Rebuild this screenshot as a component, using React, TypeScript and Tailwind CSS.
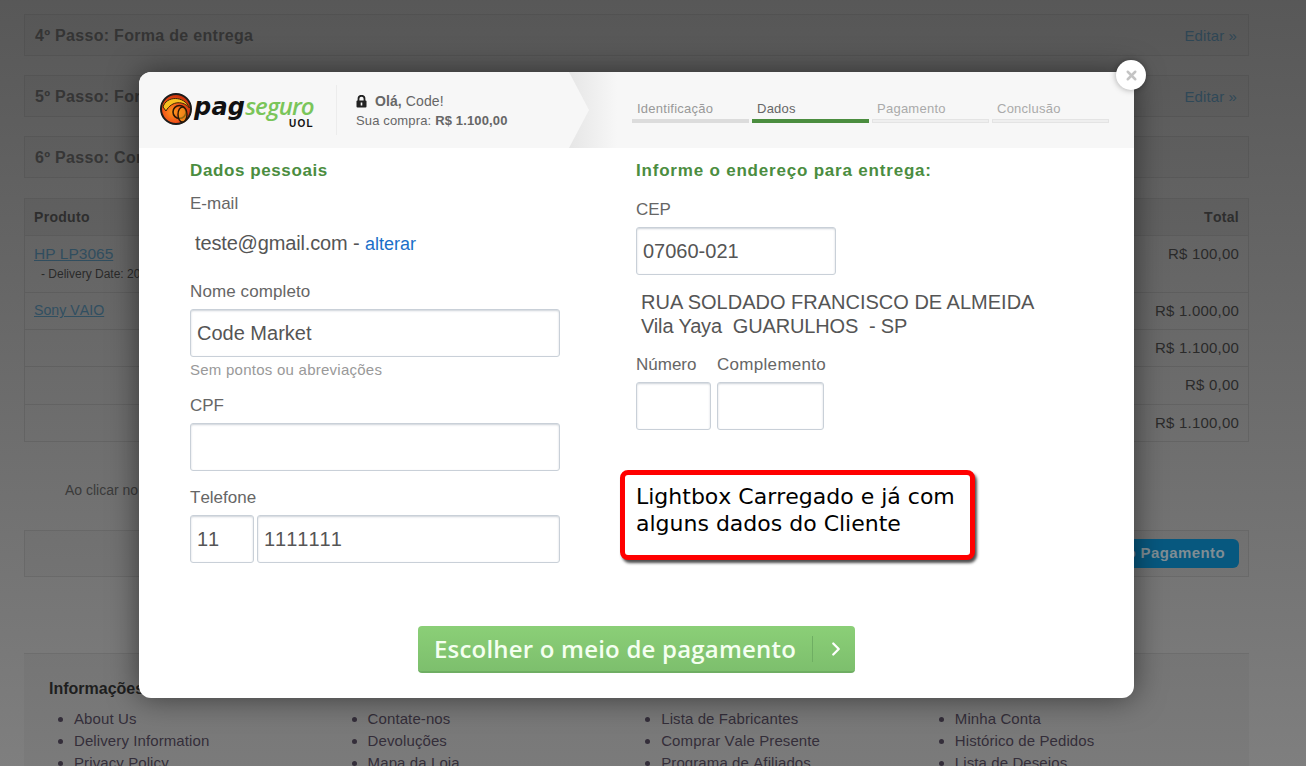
import React from "react";
import { X, ChevronRight } from "lucide-react";

const steps = [
  { title: "4º Passo: Forma de entrega", edit: true },
  { title: "5º Passo: Forma de pagamento", edit: true },
  { title: "6º Passo: Confirmar pedido", edit: false },
];

const totals = [
  { value: "R$ 1.100,00", height: "h-[37px]" },
  { value: "R$ 0,00", height: "h-[38px]" },
  { value: "R$ 1.100,00", height: "h-[37px]" },
];

const footerLists = [
  { title: "Informações", items: ["About Us", "Delivery Information", "Privacy Policy"] },
  { title: "", items: ["Contate-nos", "Devoluções", "Mapa da Loja"] },
  { title: "", items: ["Lista de Fabricantes", "Comprar Vale Presente", "Programa de Afiliados"] },
  { title: "", items: ["Minha Conta", "Histórico de Pedidos", "Lista de Desejos"] },
];

const wizard = [
  { label: "Identificação", text: "text-[#999]", bar: "bg-[#dcdcdc]" },
  { label: "Dados", text: "text-[#666]", bar: "bg-[#4b8d3f]" },
  { label: "Pagamento", text: "text-[#aaa]", bar: "bg-[#efefef] border border-[#e4e4e4]" },
  { label: "Conclusão", text: "text-[#aaa]", bar: "bg-[#efefef] border border-[#e4e4e4]" },
];

const Field = ({ value, className }: { value?: string; className: string }) => (
  <div
    className={`h-12 shrink-0 rounded-[3px] border border-[#c9d0d8] bg-white px-[6px] text-[20px] leading-[46px] text-[#555] shadow-[inset_0_1px_2px_rgba(90,105,125,0.3)] ${className}`}
  >
    {value}
  </div>
);

const Logo = () => (
  <div className="flex w-[177px] items-start">
    <svg width="32" height="32" viewBox="0 0 32 32" className="mt-[1px] shrink-0">
      <defs>
        <radialGradient id="uol" cx="0.4" cy="0.6" r="0.6">
          <stop offset="0" stopColor="#ff9a1a" />
          <stop offset="0.6" stopColor="#f0501a" />
          <stop offset="1" stopColor="#c8320a" />
        </radialGradient>
      </defs>
      <circle cx="16" cy="16" r="15" fill="url(#uol)" stroke="#1c1c1c" strokeWidth="2" />
      <path d="M3 14C6 3 24 2 29.5 15C24 8 12 7 6 18Z" fill="#f8c020" stroke="#3a2408" strokeWidth="1" />
      <circle cx="19.5" cy="19" r="6.5" fill="none" stroke="#2a1606" strokeWidth="1.6" />
      <ellipse cx="22.5" cy="21.5" rx="4.5" ry="7.5" fill="#f6b81a" fillOpacity="0.5" stroke="#2a1606" strokeWidth="1.4" />
    </svg>
    <div className="ml-[2px] flex flex-col items-end">
      <div className="text-[24px] leading-[28px] italic">
        <span className="font-['DejaVu_Sans',sans-serif] font-bold tracking-[0.2px] text-[#111]">pag</span>
        <span className="font-['Open_Sans',sans-serif] font-semibold tracking-[-0.9px] text-[#7ac55a]">seguro</span>
      </div>
      <div className="-mt-[2px] text-[10px] leading-[10px] font-bold tracking-[1.2px] text-[#111]">UOL</div>
    </div>
  </div>
);

export default function App() {
  return (
    <div className="relative h-[766px] w-[1306px] overflow-hidden bg-white font-['Liberation_Sans',Arial,sans-serif] [font-kerning:none]">
      {/* Checkout page behind the lightbox */}
      <div className="flex flex-col px-6 pt-[14px] text-[15px] text-[#444]">
        <div className="flex w-[1225px] flex-col gap-[19px]">
          {steps.map((s) => (
            <div
              key={s.title}
              className="flex h-[42px] items-center justify-between border border-[#ddd] bg-[#f8f8f8] pt-[2px] pr-[11px] pl-[10px]"
            >
              <span className="text-[16px] font-bold tracking-[0.3px] text-[#555]">{s.title}</span>
              {s.edit && <span className="text-[15px] tracking-[0.1px] text-[#3ba7e8]">Editar »</span>}
            </div>
          ))}
        </div>

        <div className="mt-[20px] flex w-[1225px] flex-col border border-b-0 border-[#ddd]">
          <div className="flex h-[37px] items-center justify-between border-b border-[#ddd] bg-[#f2f2f2] px-[9px] text-[14px] font-bold tracking-[0.3px] text-[#333]">
            <span>Produto</span>
            <span>Total</span>
          </div>
          <div className="flex h-[57px] justify-between border-b border-[#ddd] px-[9px] pt-[9px]">
            <div>
              <div className="text-[15.5px] leading-[18px] text-[#3ba7e8] underline">HP LP3065</div>
              <div className="pt-[1px] pl-[7px] text-[12px] leading-[20px] text-[#222]">- Delivery Date: 2011-04-22</div>
            </div>
            <span className="leading-[18px] tracking-[0.2px] text-[#222]">R$ 100,00</span>
          </div>
          <div className="flex h-[37px] items-center justify-between border-b border-[#ddd] px-[9px]">
            <span className="text-[14.2px] text-[#3ba7e8] underline">Sony VAIO</span>
            <span className="tracking-[0.2px] text-[#222]">R$ 1.000,00</span>
          </div>
          {totals.map((t, i) => (
            <div
              key={i}
              className={`flex items-center justify-end border-b border-[#ddd] px-[9px] tracking-[0.2px] text-[#222] ${t.height}`}
            >
              <span>{t.value}</span>
            </div>
          ))}
        </div>

        <div className="mt-[39px] pl-[41px] text-[14px] leading-[18px] text-[#555]">Ao clicar no botão</div>

        <div className="mt-[31px] flex h-[47px] w-[1225px] items-center justify-end border border-[#ddd] bg-[#f8f8f8] pr-[9px]">
          <div className="relative z-10 flex h-[29px] w-[300px] items-center justify-end rounded-[6px] bg-[#07587f] pr-[14px] text-[15px] font-bold tracking-[0.4px] text-[#7f8d94]">
            Ir para o Pagamento
          </div>
        </div>

        <div className="mt-[76px] h-[160px] w-[1225px] border-t border-[#ddd] bg-[#f4f4f4] pt-[25px] pl-[25px]">
          <div className="grid grid-cols-[293.6px_293.6px_293.6px_293.6px]">
            {footerLists.map((col, i) => (
              <div key={i}>
                <div className="h-[29px] text-[16px] leading-[20px] font-bold text-black">{col.title}</div>
                <ul className="list-disc pl-[25px] text-[15px] leading-[22px] tracking-[0.1px] text-[#3a2a4a]">
                  {col.items.map((it) => (
                    <li key={it}>{it}</li>
                  ))}
                </ul>
              </div>
            ))}
          </div>
        </div>
      </div>

      {/* Dark backdrop */}
      <div className="absolute inset-0 bg-gradient-to-b from-[rgba(43,43,43,0.79)] to-[rgba(48,48,48,0.62)]" />

      {/* Lightbox */}
      <div className="absolute top-[72px] left-[139px] z-20 h-[626px] w-[995px] rounded-[12px] bg-white shadow-[0_0_30px_rgba(0,0,0,0.5)]">
        <header className="relative flex h-[76px] items-center overflow-hidden rounded-t-[12px] bg-[#f7f7f7] pl-[21px]">
          <Logo />
          <div className="ml-[-1px] h-[50px] w-px bg-[#ececec]" />
          <div className="ml-[19px] pt-[2px]">
            <div className="flex items-center text-[14px] leading-[19px] tracking-[0.1px] text-[#666]">
              <svg width="11" height="13" viewBox="0 0 11 13" className="mr-[8px] text-[#222]">
                <path d="M2.5 6V3.8a3 3 0 0 1 6 0V6" fill="none" stroke="currentColor" strokeWidth="1.8" />
                <rect x="0.5" y="5.5" width="10" height="7" rx="1" fill="currentColor" />
                <rect x="4.7" y="7.5" width="1.6" height="3" fill="#f7f7f7" />
              </svg>
              <b>Olá,&nbsp;</b>Code!
            </div>
            <div className="text-[13px] leading-[19px] tracking-[0.15px] text-[#666]">
              Sua compra: <b>R$ 1.100,00</b>
            </div>
          </div>
          <svg width="48" height="76" viewBox="0 0 48 76" className="absolute top-0 left-[430px]">
            <defs>
              <linearGradient id="arrow" x1="0" x2="1" y1="0" y2="0">
                <stop offset="0" stopColor="#e6e6e6" />
                <stop offset="1" stopColor="#f7f7f7" />
              </linearGradient>
            </defs>
            <rect width="48" height="76" fill="url(#arrow)" />
            <path d="M0 0L20 38L0 76Z" fill="#f7f7f7" />
          </svg>
          <div className="relative ml-auto flex gap-[3px] pt-[3px] pr-[25px]">
            {wizard.map((w) => (
              <div key={w.label} className="w-[117px]">
                <div className={`pl-[5px] text-[13px] leading-[18px] tracking-[0.25px] ${w.text}`}>{w.label}</div>
                <div className={`mt-[1px] h-[4px] ${w.bar}`} />
              </div>
            ))}
          </div>
        </header>

        <div className="flex pl-[51px]">
          {/* Dados pessoais */}
          <div className="flex w-[370px] flex-col text-[#666]">
            <h2 className="mt-[13px] text-[17px] leading-[20px] font-bold tracking-[0.6px] text-[#4b8d3f]">Dados pessoais</h2>
            <div className="mt-[13px] text-[17px] leading-[20px]">E-mail</div>
            <div className="mt-[17px] pl-[5px] text-[20px] leading-[24px] tracking-[-0.15px] text-[#555]">
              teste@gmail.com - <span className="text-[18px] tracking-normal text-[#1a6fc9]">alterar</span>
            </div>
            <div className="mt-[26px] text-[17px] leading-[20px] tracking-[0.1px]">Nome completo</div>
            <Field value="Code Market" className="mt-[7px] w-[370px]" />
            <div className="mt-[3px] text-[15px] leading-[20px] tracking-[0.25px] text-[#999]">Sem pontos ou abreviações</div>
            <div className="mt-[16px] text-[17px] leading-[20px]">CPF</div>
            <Field className="mt-[7px] w-[370px]" />
            <div className="mt-[17px] text-[17px] leading-[20px]">Telefone</div>
            <div className="mt-[7px] flex gap-[3px]">
              <Field value="11" className="w-[64px]" />
              <Field value="1111111" className="w-[303px]" />
            </div>
          </div>

          {/* Endereço */}
          <div className="ml-[76px] flex flex-col text-[#666]">
            <h2 className="mt-[13px] text-[17px] leading-[20px] font-bold tracking-[0.8px] text-[#4b8d3f]">
              Informe o endereço para entrega:
            </h2>
            <div className="mt-[19px] text-[17px] leading-[20px]">CEP</div>
            <Field value="07060-021" className="mt-[7px] w-[200px]" />
            <div className="mt-[15px] pl-[5px] text-[20px] leading-[24px] whitespace-pre text-[#555] [font-kerning:normal]">
              <div>RUA SOLDADO FRANCISCO DE ALMEIDA</div>
              <div className="tracking-[-0.15px]">{"Vila Yaya  GUARULHOS  - SP"}</div>
            </div>
            <div className="mt-[17px] flex gap-[6px]">
              <div className="w-[75px]">
                <div className="text-[17px] leading-[20px]">Número</div>
                <Field className="mt-[7px] w-[75px]" />
              </div>
              <div>
                <div className="text-[17px] leading-[20px] tracking-[0.3px] whitespace-nowrap">Complemento</div>
                <Field className="mt-[7px] w-[107px]" />
              </div>
            </div>
          </div>
        </div>

        <div className="mt-[63px] flex justify-center">
          <div className="flex h-[47px] w-[437px] items-center rounded-[4px] border-b-2 border-[#6fae63] bg-gradient-to-b from-[#8bcf77] to-[#7dbf6d] pl-[16px] font-['Open_Sans',sans-serif] text-[24px] font-semibold tracking-[0.2px] text-[#f4fff0]">
            <span className="w-[378px]">Escolher o meio de pagamento</span>
            <span className="h-[26px] w-px bg-[#6fae63]" />
            <ChevronRight size={22} strokeWidth={2.5} className="ml-[12px] text-white" />
          </div>
        </div>

        {/* Close */}
        <div className="absolute top-[-12px] right-[-12px] flex h-[30px] w-[30px] items-center justify-center rounded-full bg-white shadow-[0_0_6px_rgba(0,0,0,0.35)]">
          <X size={15} strokeWidth={4} className="text-[#c4c4c4]" />
        </div>
      </div>

      {/* Screenshot annotation */}
      <div className="absolute top-[470px] left-[620px] z-30 h-[90px] w-[355px] rounded-[8px] border-[5px] border-[#ff0000] bg-white pt-[8px] pl-[11px] font-['DejaVu_Sans',sans-serif] text-[22px] leading-[27px] text-black shadow-[2px_3px_3px_rgba(0,0,0,0.7)]">
        Lightbox Carregado e já com
        <br />
        alguns dados do Cliente
      </div>
    </div>
  );
}
